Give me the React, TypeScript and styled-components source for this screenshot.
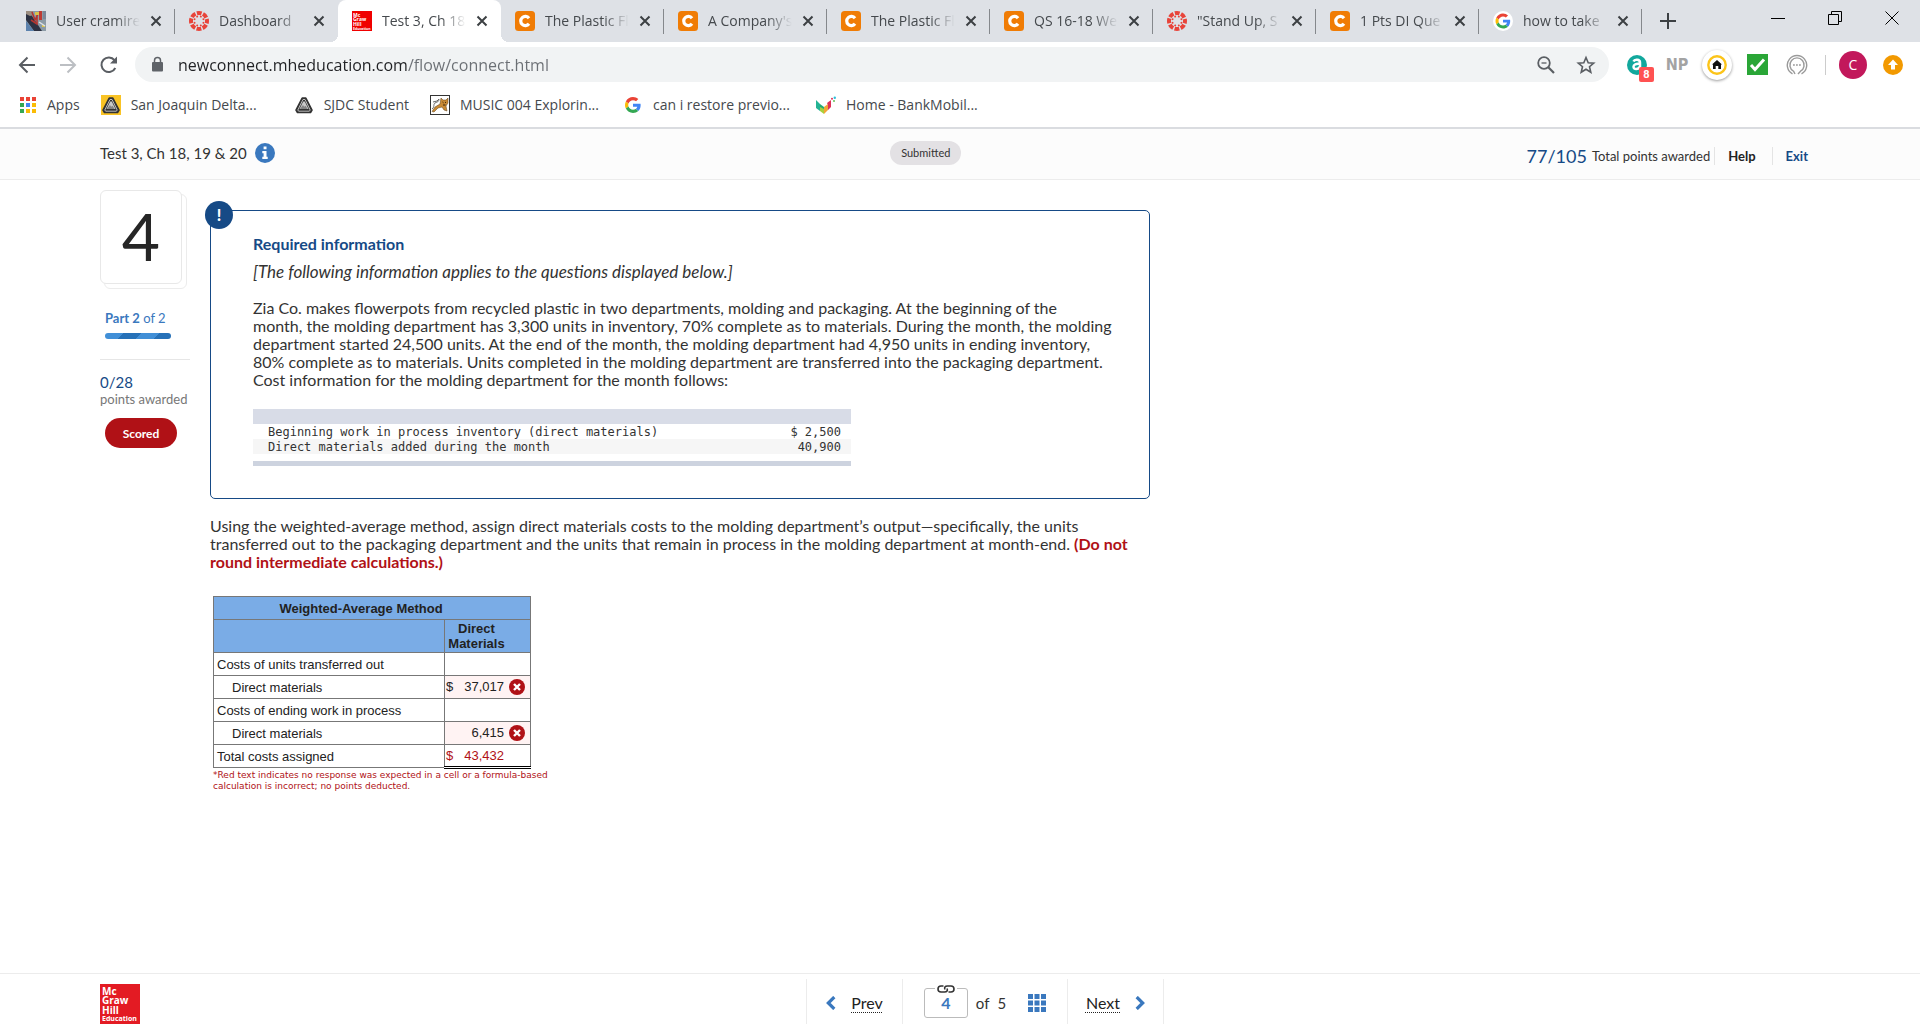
import React from 'react';
import styled, { createGlobalStyle, css } from 'styled-components';

const navy = '#164a86';
const blue = '#3a78be';
const red = '#b01116';
const uiFont = '"Open Sans", "Noto Sans", sans-serif';
const pageFont = 'Lato, "Open Sans", sans-serif';

const GlobalStyle = createGlobalStyle`
  *, *::before, *::after { box-sizing: border-box; }
  body { margin: 0; background: #fff; color: #333; font-family: ${pageFont}; }
  button, input { font: inherit; color: inherit; margin: 0; }
  button { padding: 0; border: 0; background: none; cursor: pointer; }
  a { color: inherit; text-decoration: none; }
  svg { display: block; flex: none; }
  h1, h2, p { margin: 0; }
`;

const Page = styled.div`
  display: flex;
  flex-direction: column;
  min-height: 100vh;
`;

/* ---------- browser chrome ---------- */

const Chrome = styled.header`
  font-family: ${uiFont};
  border-bottom: 2px solid #dadce0;
`;

const TabStrip = styled.div`
  display: flex;
  height: 42px;
  padding-left: 12px;
  background: #dee1e6;
`;

const Tab = styled.div<{ $active?: boolean; $divider?: boolean }>`
  position: relative;
  display: flex;
  align-items: center;
  gap: 10px;
  flex: 0 1 163px;
  min-width: 0;
  padding: 0 13px 0 14px;
  color: #45494d;
  ${(p) => p.$active && css`
    background: #fff;
    border-radius: 8px 8px 0 0;
    &::before, &::after {
      content: '';
      position: absolute;
      bottom: 0;
      width: 8px;
      height: 8px;
    }
    &::before { left: -8px; background: radial-gradient(circle at 0 0, transparent 8px, #fff 8px); }
    &::after { right: -8px; background: radial-gradient(circle at 100% 0, transparent 8px, #fff 8px); }
  `}
  ${(p) => p.$divider && css`
    &::after {
      content: '';
      position: absolute;
      right: 0;
      top: 9px;
      width: 1px;
      height: 25px;
      background: #85888c;
    }
  `}
`;

const TabTitle = styled.button`
  flex: 1;
  min-width: 0;
  overflow: hidden;
  white-space: nowrap;
  text-align: left;
  font-size: 14px;
  line-height: 24px;
  mask-image: linear-gradient(to right, #000 70%, transparent 100%);
`;

const IconButton = styled.button`
  display: grid;
  place-items: center;
  flex: none;
`;

const NewTab = styled(IconButton)`
  width: 52px;
`;

const WindowControls = styled.div`
  display: flex;
  margin-left: auto;
`;

const WindowButton = styled(IconButton)`
  width: 57px;
  height: 36px;
`;

const Toolbar = styled.div`
  display: flex;
  align-items: center;
  height: 45px;
  padding: 0 17px 0 6px;
`;

const NavButton = styled(IconButton)`
  width: 41px;
  height: 35px;
`;

const Omnibox = styled.form`
  display: flex;
  align-items: center;
  flex: 1;
  gap: 12px;
  height: 35px;
  margin-left: 6px;
  padding: 0 13px 0 14px;
  border-radius: 18px;
  background: #f1f3f4;
`;

const UrlInput = styled.input`
  flex: 1;
  min-width: 0;
  padding: 0;
  border: 0;
  font-size: 16px;
  line-height: 24px;
  color: transparent;
  background: linear-gradient(to right, #202124 229px, #6b6f74 229px);
  background-clip: text;
  outline: 0;
`;

const OmniActions = styled.div`
  display: flex;
  gap: 20px;
`;

const Extensions = styled.div`
  display: grid;
  grid-auto-flow: column;
  grid-auto-columns: 40px;
  align-items: center;
  justify-items: center;
  margin-left: 8px;
`;

const ExtensionIcon = styled(IconButton)`
  position: relative;
  width: 36px;
  height: 35px;
`;

const CountBadge = styled.span`
  position: absolute;
  right: 1px;
  bottom: 0;
  width: 15px;
  border-radius: 2px;
  background: #ff5252;
  color: #fff;
  font: 700 11px/15px Roboto, sans-serif;
`;

const NpMark = styled.span`
  color: #a3a3a3;
  font: 700 16px/20px "DejaVu Sans Condensed", Roboto, sans-serif;
`;

const HomeDisc = styled.span`
  display: grid;
  place-items: center;
  width: 30px;
  height: 30px;
  border-radius: 50%;
  background: #fff;
  box-shadow: 0 1px 3px rgba(0, 0, 0, 0.4);
`;

const AccountArea = styled.div`
  display: flex;
  align-items: center;
  gap: 16px;
  margin-left: 8px;
  padding-left: 14px;
  background: linear-gradient(#ccc, #ccc) left center / 1px 20px no-repeat;
`;

const Avatar = styled.button`
  width: 28px;
  height: 28px;
  border-radius: 50%;
  background: #c2185b;
  color: #fff;
  font-size: 14px;
  line-height: 28px;
`;

const Bookmarks = styled.nav`
  display: flex;
  align-items: center;
  gap: 21px;
  height: 40px;
  padding: 0 19px 4px;
`;

const Bookmark = styled.a<{ $full?: boolean }>`
  display: flex;
  align-items: center;
  gap: 10px;
  flex: 0 0 ${(p) => (p.$full ? '172px' : 'auto')};
  color: #45494d;
  font-size: 14px;
  line-height: 20px;
  white-space: nowrap;
`;

/* ---------- assignment page ---------- */

const AssignmentBar = styled.div`
  display: grid;
  grid-template-columns: 14fr auto 15fr;
  align-items: center;
  height: 51px;
  padding: 0 112px 3px 100px;
  background: #fcfcfc;
  border-bottom: 1px solid #ececec;
`;

const AssignmentTitle = styled.div`
  display: flex;
  align-items: center;
  gap: 8px;
`;

const TitleText = styled.h1`
  font-size: 15px;
  line-height: 20px;
  font-weight: 400;
`;

const StatusPill = styled.span`
  padding: 0 11px;
  border-radius: 12px;
  background: #e3e1e4;
  font-size: 11px;
  line-height: 24px;
`;

const Summary = styled.div`
  display: flex;
  align-items: center;
  justify-content: flex-end;
  padding-top: 7px;
  font-size: 13px;
  line-height: 18px;
`;

const Score = styled.span`
  margin-right: 5px;
  color: ${navy};
  font-size: 18px;
`;

const SummaryLink = styled.a<{ $accent?: boolean }>`
  margin-left: ${(p) => (p.$accent ? '16px' : '4px')};
  padding-left: 13px;
  border-left: 1px solid #e4e4e4;
  color: ${(p) => (p.$accent ? navy : '#222')};
  font-weight: 700;
`;

const Content = styled.main`
  display: flex;
  flex: 1;
  gap: 20px;
  padding: 10px 100px 24px;
`;

const Sidebar = styled.aside`
  flex: 0 0 90px;
`;

const QuestionCard = styled.div`
  position: relative;
  width: 82px;
  padding-bottom: 2px;
  border: 1px solid #e8e8e8;
  border-radius: 6px;
  background: #fff;
  color: #262626;
  font-size: 66px;
  line-height: 90px;
  text-align: center;
  &::after {
    content: '';
    position: absolute;
    inset: 3px -6px -6px 3px;
    z-index: -1;
    border: 1px solid #ececec;
    border-radius: 6px;
  }
`;

const PartBlock = styled.div`
  margin-top: 25px;
  padding: 0 5px 20px;
  border-bottom: 1px solid #e6e6e6;
  color: ${blue};
  font-size: 13px;
  line-height: 18px;
`;

const PartBar = styled.div`
  width: 66px;
  height: 6px;
  margin-top: 6px;
  border-radius: 3px;
  background: linear-gradient(135deg, #418fd7 25%, #2671b8 25%, #2671b8 50%, #418fd7 50%, #418fd7 75%, #2671b8 75%) 0 0 / 36px 36px;
`;

const Points = styled.div`
  margin-top: 14px;
  color: ${navy};
  font-size: 15px;
  line-height: 16px;
`;

const PointsLabel = styled.div`
  color: #777;
  font-size: 13px;
  line-height: 18px;
`;

const ScoredButton = styled.button`
  display: block;
  width: 72px;
  height: 30px;
  margin: 10px 0 0 5px;
  border-radius: 15px;
  background: ${red};
  color: #fff;
  font-size: 12px;
  font-weight: 700;
`;

const Question = styled.article`
  flex: 0 1 940px;
  min-width: 0;
  padding-top: 20px;
  font-size: 16px;
  line-height: 18px;
`;

const InfoBox = styled.section`
  position: relative;
  padding: 24px 34px 32px 42px;
  border: 1px solid ${navy};
  border-radius: 5px;
`;

const InfoBadge = styled.span`
  position: absolute;
  left: -6px;
  top: -10px;
  width: 28px;
  border-radius: 50%;
  background: ${navy};
  color: #fff;
  font-size: 16px;
  font-weight: 900;
  line-height: 28px;
  text-align: center;
`;

const InfoTitle = styled.h2`
  color: ${navy};
  font-size: 16px;
  font-weight: 700;
  line-height: 18px;
`;

const Applies = styled.p`
  margin: 10px 0 18px;
  font-size: 17px;
  font-style: italic;
`;

const LedgerTable = styled.table`
  width: 598px;
  max-width: 100%;
  margin-top: 20px;
  border-spacing: 0;
  font-family: "DejaVu Sans Mono", "Liberation Mono", monospace;
  font-size: 12px;
  line-height: 14px;
  td, th { padding: 1px 10px 0 15px; font-weight: 400; text-align: left; }
  td { text-align: right; }
  tbody tr:nth-child(2) { background: #f6f6f6; }
`;

const LedgerHead = styled.thead`
  background: #d8dce7;
  td { height: 15px; }
`;

const LedgerRule = styled.div`
  width: 598px;
  max-width: 100%;
  height: 5px;
  margin-top: 7px;
  background: #cdd3df;
`;

const Prompt = styled.p`
  margin-top: 18px;
`;

const Caution = styled.strong`
  color: ${red};
`;

const AnswerTable = styled.table`
  width: 318px;
  margin: 25px 0 0 3px;
  border-collapse: collapse;
  table-layout: fixed;
  color: #222;
  font-family: "Liberation Sans", Arial, sans-serif;
  font-size: 13px;
  line-height: 15px;
  th, td { height: 23px; border: 1px solid #777; }
`;

const LabelColumn = styled.col`
  width: 231px;
`;

const HeadCell = styled.th`
  padding: 1px 22px 1px 0;
  background: #7aace6;
`;

const RowLabel = styled.th<{ $indent?: boolean }>`
  padding: 0 0 0 ${(p) => (p.$indent ? '18px' : '3px')};
  font-weight: 400;
  text-align: left;
`;

const ValueCell = styled.td<{ $wrong?: boolean; $total?: boolean }>`
  padding: 0;
  ${(p) => p.$wrong && css`background: #fff3f3;`}
  ${(p) => p.$total && css`
    && { border-top: 1px solid #000; border-bottom: 3px double #000; }
    color: ${red};
  `}
`;

const Amount = styled.div`
  display: grid;
  grid-template-columns: 8px 1fr 16px;
  column-gap: 5px;
  padding: 0 5px 0 1px;
`;

const Figure = styled.span`
  grid-column: 2;
  text-align: right;
`;

const Note = styled.p`
  max-width: 348px;
  padding: 1px 0 0 3px;
  color: ${red};
  font-family: "DejaVu Sans", sans-serif;
  font-size: 9px;
  line-height: 11px;
`;

const Footer = styled.footer`
  display: grid;
  grid-template-columns: 40px 1fr auto 1fr;
  height: 57px;
  padding: 5px 90px 8px 100px;
  border-top: 1px solid #ececec;
`;

const Pager = styled.nav`
  grid-column: 3;
  display: flex;
  border-left: 1px solid #ececec;
  font-size: 16px;
  line-height: 20px;
`;

const PagerSection = styled.div<{ $width: number }>`
  display: flex;
  align-items: center;
  justify-content: center;
  width: ${(p) => p.$width}px;
  padding-top: 2px;
  border-right: 1px solid #ececec;
`;

const PagerLink = styled.a`
  display: flex;
  align-items: center;
  gap: 15px;
  color: #222;
`;

const PagerWord = styled.span`
  text-decoration: underline dotted 1px;
  text-underline-offset: 3px;
`;

const PageField = styled.label`
  position: relative;
  margin-right: 8px;
`;

const PageInput = styled.input`
  display: block;
  width: 44px;
  height: 30px;
  padding: 0;
  border: 1px solid #bbb;
  border-radius: 3px;
  color: ${blue};
  font-weight: 700;
  text-align: center;
`;

const LinkMark = styled.span`
  position: absolute;
  left: 11px;
  top: -3px;
  padding: 0 2px;
  background: #fff;
`;

const PageCount = styled.span`
  display: flex;
  gap: 8px;
  margin-right: 22px;
  font-size: 15px;
`;

const PublisherLogo = styled.a`
  display: block;
  height: 40px;
  margin-top: 5px;
`;

/* ---------- drawings ---------- */

const McGrawIcon = ({ size, bg }: { size: number; bg: string }) => (
  <svg width={size} height={size} viewBox="0 0 40 40">
    <rect width="40" height="40" fill={bg} />
    <g fill="#fff" fontFamily="Open Sans, sans-serif" fontWeight="700" fontSize="10">
      <text x="2" y="11">Mc</text>
      <text x="2" y="20">Graw</text>
      <text x="2" y="30">Hill</text>
      <text x="2" y="37" fontSize="7">Education</text>
    </g>
  </svg>
);

const CanvasIcon = () => (
  <svg width="20" height="20" viewBox="0 0 20 20">
    <circle cx="10" cy="10" r="8" fill="none" stroke="#e8443a" strokeWidth="4" strokeDasharray="4.8 1.483" strokeDashoffset="2.4" />
    {[0, 45, 90, 135, 180, 225, 270, 315].map((a) => (
      <circle key={a} cx="10" cy="5.2" r="1" fill="#e8443a" transform={`rotate(${a + 22.5} 10 10)`} />
    ))}
  </svg>
);

const CheggIcon = () => (
  <svg width="20" height="20" viewBox="0 0 20 20">
    <rect width="20" height="20" rx="3.5" fill="#f07c05" />
    <path d="M14 7.2A4.6 4.6 0 1 0 14 12.8" fill="none" stroke="#fff" strokeWidth="3.2" />
  </svg>
);

const GoogleIcon = ({ disc }: { disc?: boolean }) => (
  <svg width="20" height="20" viewBox="0 0 20 20">
    {disc && <circle cx="10" cy="10" r="10" fill="#fff" />}
    <g transform={disc ? 'translate(2.5 2.5) scale(.3125)' : 'translate(2 2) scale(.333)'}>
      <path fill="#EA4335" d="M24 9.5c3.54 0 6.71 1.22 9.21 3.6l6.85-6.85C35.9 2.38 30.47 0 24 0 14.62 0 6.51 5.38 2.56 13.22l7.98 6.19C12.43 13.72 17.74 9.5 24 9.5z" />
      <path fill="#4285F4" d="M46.98 24.55c0-1.57-.15-3.09-.38-4.55H24v9.02h12.94c-.58 2.96-2.26 5.48-4.78 7.18l7.73 6c4.51-4.18 7.09-10.36 7.09-17.65z" />
      <path fill="#FBBC05" d="M10.53 28.59c-.48-1.45-.76-2.99-.76-4.59s.27-3.14.76-4.59l-7.98-6.19C.92 16.46 0 20.12 0 24c0 3.88.92 7.54 2.56 10.78l7.97-6.19z" />
      <path fill="#34A853" d="M24 48c6.48 0 11.93-2.13 15.89-5.81l-7.73-6c-2.15 1.45-4.92 2.3-8.16 2.3-6.26 0-11.57-4.22-13.47-9.91l-7.98 6.19C6.51 42.62 14.62 48 24 48z" />
    </g>
  </svg>
);

const PhotoIcon = () => (
  <svg width="20" height="20" viewBox="0 0 20 20">
    <rect width="20" height="20" fill="#8c9ba6" />
    <path d="M0 2h4l12 18H8L0 9z" fill="#2c3142" />
    <path d="M0 0h7v4L4 5 0 3z" fill="#9b8d80" />
    <path d="M0 10l8 10H0z" fill="#5c82ad" />
    <path d="M6 1l3 8 4-8M5 9l6 4V1" fill="none" stroke="#b23530" strokeWidth="1.6" />
    <path d="M13 0h3v9h-3z" fill="#bd3b34" />
    <path d="M17 0h3v8h-3z" fill="#7b8899" />
    <path d="M9 1h4v3H9zM16 14h3v2h-3z" fill="#d9c34c" />
    <path d="M13 11l6 4" stroke="#dde3e8" strokeWidth="1.5" />
  </svg>
);

const DeltaIcon = ({ bg }: { bg?: string }) => (
  <svg width="20" height="20" viewBox="0 0 20 20">
    {bg && <rect width="20" height="20" fill={bg} />}
    <path d="M8.2 3h3.6L18 15l-1.5 2.5h-13L2 15z" fill="#333" stroke="#333" strokeWidth="1.6" strokeLinejoin="round" />
    <path d="M9 4.5h2L16.2 15l-.8 1.2H4.6L3.8 15z" fill="none" stroke="#ddd" strokeWidth=".8" />
    <path d="M9.2 6.5h1.6L14.500 14H5.500z" fill="#c9c9c9" />
    <path d="M7 12.5L9 10l1.200 1.800 1.400-1 2 3.200H6z" fill="#858585" />
  </svg>
);

const MustangIcon = () => (
  <svg width="20" height="20" viewBox="0 0 20 20">
    <rect x=".5" y=".5" width="19" height="19" fill="#fff" stroke="#333" />
    <path d="M11 3l2 2h3l2-2v5l-2 3 1 5-3-1-2-3-4 1-4 4-2-.5L5 12l5-3z" fill="#c98a35" stroke="#5d3f18" strokeWidth=".5" />
    <path d="M2 14c3-2 1-5 3-6s4-1 4-4L7 6 3 7" fill="none" stroke="#666" strokeWidth="1" />
    <path d="M12.5 7l1 .8M16 7l-1 .8M13 10h2.5" stroke="#3a240b" />
  </svg>
);

const BankIcon = () => (
  <svg width="20" height="20" viewBox="0 0 20 20">
    <path d="M0 5l4 4v7l-4-3z" fill="#23b394" />
    <path d="M4 9l4 3v3l-4 1z" fill="#23a876" />
    <path d="M4 12l4 2v5l-4-3z" fill="#a7cf3c" />
    <path d="M8 12l4-3v6l-4 4z" fill="#f3a536" />
    <path d="M11 8l4-3v7l-3 3v-5z" fill="#de3158" />
    <circle cx="16" cy="3.8" r="1" fill="#de3158" /><circle cx="18.8" cy="2.8" r="1.2" fill="#2cc0dc" /><circle cx="18" cy="6" r=".9" fill="#57b947" />
  </svg>
);

const AppsIcon = () => (
  <svg width="18" height="18" viewBox="0 0 18 18">
    {['#ea4335', '#ea4335', '#ea4335', '#34a853', '#4285f4', '#fbbc05', '#34a853', '#fbbc05', '#fbbc05'].map((c, i) => (
      <rect key={i} x={(i % 3) * 6 + 1} y={Math.floor(i / 3) * 6 + 1} width="4" height="4" fill={c} />
    ))}
  </svg>
);

const CloseIcon = () => (
  <svg width="12" height="12" viewBox="0 0 12 12"><path d="M1.5 1.5l9 9m0-9l-9 9" stroke="#3c4043" strokeWidth="2" /></svg>
);

const ArrowIcon = ({ flip }: { flip?: boolean }) => (
  <svg width="18" height="18" viewBox="0 0 18 18">
    <path d="M17 9H2m7.500-7.500L2 9l7.500 7.500" transform={flip ? 'rotate(180 9 9)' : undefined} fill="none" stroke={flip ? '#bcbfc3' : '#5a5e63'} strokeWidth="2" />
  </svg>
);

const ReloadIcon = () => (
  <svg width="20" height="20" viewBox="0 0 20 20">
    <path d="M16.300 13A7.300 7.300 0 1 1 15.500 5.200" fill="none" stroke="#5a5e63" strokeWidth="2" />
    <path d="M18 1.500v7h-7z" fill="#5a5e63" />
  </svg>
);

const LockIcon = () => (
  <svg width="17" height="17" viewBox="0 0 17 17">
    <rect x="3" y="6" width="11" height="9.500" rx="1" fill="#5f6368" />
    <path d="M5.500 7V4.500a3 3 0 0 1 6 0V7" fill="none" stroke="#5f6368" strokeWidth="1.500" />
  </svg>
);

const ZoomOutIcon = () => (
  <svg width="20" height="20" viewBox="0 0 20 20" fill="none" stroke="#5a5e63" strokeWidth="1.800">
    <circle cx="8" cy="8" r="5.800" /><path d="M12.300 12.300L18 18" strokeWidth="2.200" /><path d="M5.500 8h5" strokeWidth="1.300" />
  </svg>
);

const StarIcon = () => (
  <svg width="20" height="20" viewBox="0 0 20 20">
    <path d="M10 2.500l2.200 5.200 5.500.4-4.200 3.600 1.300 5.500L10 14.200l-4.800 3 1.300-5.500-4.200-3.600 5.500-.4z" fill="none" stroke="#5a5e63" strokeWidth="1.600" />
  </svg>
);

const AmazonAssistantIcon = () => (
  <svg width="20" height="20" viewBox="0 0 20 20">
    <circle cx="10" cy="10" r="10" fill="#12a89d" />
    <path d="M6.500 6.500c1-2.500 6.500-2.500 6.500 1V13l1.500 1.500M13 9c-4-.5-6.500.5-6.500 2.800 0 3 5 3 6.500-.3" fill="none" stroke="#fff" strokeWidth="2.500" />
  </svg>
);

const HouseIcon = () => (
  <svg width="20" height="20" viewBox="0 0 20 20">
    <circle cx="10" cy="10" r="8.700" fill="#fff" stroke="#fcc419" strokeWidth="2.400" />
    <path d="M10 5l5 4.500h-1V14h-2.700v-3H8.700v3H6V9.500H5z" fill="#111" />
  </svg>
);

const CheckIcon = () => (
  <svg width="21" height="21" viewBox="0 0 21 21"><rect width="21" height="21" fill="#2aa637" /><path d="M4 11l4 4.500L17 5.500" fill="none" stroke="#fff" strokeWidth="3" /></svg>
);

const ChatIcon = () => (
  <svg width="22" height="22" viewBox="0 0 22 22" fill="none" stroke="#9a9a9a" strokeWidth="1.400">
    <path d="M6.500 19.800a9.700 9.700 0 1 1 9 0" /><path d="M7.500 17.200a7.100 7.100 0 1 1 7 0L12 20M7.500 17.200L9 20" />
    <path d="M7 11h8" strokeWidth="1.600" strokeDasharray="1.800 1.200" />
  </svg>
);

const UpdateIcon = () => (
  <svg width="20" height="20" viewBox="0 0 20 20"><circle cx="10" cy="10" r="10" fill="#f29900" /><path d="M10 4.500l5 5.500h-3v4.500H8V10H5z" fill="#fff" /></svg>
);

const InfoIcon = () => (
  <svg width="20" height="20" viewBox="0 0 20 20">
    <circle cx="10" cy="10" r="10" fill={blue} />
    <path d="M8.600 3.500h2.900v2.800H8.600zM7.300 8h4.200v5.800h1.200V16H7.300v-2.200h1.300v-3.600H7.300z" fill="#fff" />
  </svg>
);

const WrongIcon = () => (
  <svg width="16" height="16" viewBox="0 0 16 16" role="img" aria-label="incorrect">
    <circle cx="8" cy="8" r="8" fill={red} /><path d="M5 5l6 6m0-6l-6 6" stroke="#fff" strokeWidth="2.400" />
  </svg>
);

const ChevronIcon = ({ right }: { right?: boolean }) => (
  <svg width="10" height="14" viewBox="0 0 10 14">
    <path d="M8.300 1L2.300 7l6 6" transform={right ? 'rotate(180 5 7)' : undefined} fill="none" stroke={blue} strokeWidth="3.200" />
  </svg>
);

const ChainIcon = () => (
  <svg width="18" height="8" viewBox="0 0 18 8" fill="none" stroke="#333" strokeWidth="1.600">
    <path d="M6.500 1H4a3 3 0 0 0 0 6h3.500C10 7 11 5.500 10 3.500" />
    <path d="M11.500 7H14a3 3 0 0 0 0-6h-3.500C8 1 7 2.500 8 4.500" />
  </svg>
);

const GridIcon = () => (
  <svg width="18" height="18" viewBox="0 0 18 18" fill={blue}>
    {[0, 1, 2, 3, 4, 5, 6, 7, 8].map((i) => <rect key={i} x={(i % 3) * 6.500} y={Math.floor(i / 3) * 6.500} width="5" height="5" />)}
  </svg>
);

/* ---------- data ---------- */

const tabs = [
  { title: 'User cramire:', icon: <PhotoIcon />, divider: true },
  { title: 'Dashboard', icon: <CanvasIcon /> },
  { title: 'Test 3, Ch 18,', icon: <McGrawIcon size={20} bg="#f00000" />, active: true },
  { title: 'The Plastic Fl', icon: <CheggIcon />, divider: true },
  { title: "A Company's", icon: <CheggIcon />, divider: true },
  { title: 'The Plastic Fl', icon: <CheggIcon />, divider: true },
  { title: 'QS 16-18 We', icon: <CheggIcon />, divider: true },
  { title: '"Stand Up, S', icon: <CanvasIcon />, divider: true },
  { title: '1 Pts DI Que', icon: <CheggIcon />, divider: true },
  { title: 'how to take', icon: <GoogleIcon disc />, divider: true },
];

const bookmarks = [
  { label: 'Apps', icon: <AppsIcon /> },
  { label: 'San Joaquin Delta...', icon: <DeltaIcon bg="#f9c325" />, full: true },
  { label: 'SJDC Student', icon: <DeltaIcon /> },
  { label: 'MUSIC 004 Explorin...', icon: <MustangIcon />, full: true },
  { label: 'can i restore previo...', icon: <GoogleIcon />, full: true },
  { label: 'Home - BankMobil...', icon: <BankIcon />, full: true },
];

type CostRow = { label: string; indent?: boolean; currency?: boolean; amount?: string; wrong?: boolean; total?: boolean };
const costRows: CostRow[] = [
  { label: 'Costs of units transferred out' },
  { label: 'Direct materials', indent: true, currency: true, amount: '37,017', wrong: true },
  { label: 'Costs of ending work in process' },
  { label: 'Direct materials', indent: true, amount: '6,415', wrong: true },
  { label: 'Total costs assigned', currency: true, amount: '43,432', total: true },
];

/* ---------- sections ---------- */

const BrowserChrome = () => (
  <Chrome>
    <TabStrip>
      {tabs.map((t, i) => (
        <Tab key={i} $active={t.active} $divider={t.divider}>
          {t.icon}
          <TabTitle>{t.title}</TabTitle>
          <IconButton aria-label="Close tab"><CloseIcon /></IconButton>
        </Tab>
      ))}
      <NewTab aria-label="New tab">
        <svg width="16" height="16" viewBox="0 0 16 16"><path d="M8 0v16M0 8h16" stroke="#3c4043" strokeWidth="2" /></svg>
      </NewTab>
      <WindowControls>
        <WindowButton aria-label="Minimize"><svg width="14" height="14" viewBox="0 0 14 14"><path d="M0 7.500h14" stroke="#000" /></svg></WindowButton>
        <WindowButton aria-label="Restore"><svg width="14" height="14" viewBox="0 0 14 14" fill="none" stroke="#000"><path d="M.5 3.500h10v10H.5zM3.500 3.500v-3h10v10h-3" /></svg></WindowButton>
        <WindowButton aria-label="Close"><svg width="14" height="14" viewBox="0 0 14 14"><path d="M.5 .5l13 13m0-13l-13 13" stroke="#000" /></svg></WindowButton>
      </WindowControls>
    </TabStrip>
    <Toolbar>
      <NavButton aria-label="Back"><ArrowIcon /></NavButton>
      <NavButton aria-label="Forward"><ArrowIcon flip /></NavButton>
      <NavButton aria-label="Reload"><ReloadIcon /></NavButton>
      <Omnibox>
        <LockIcon />
        <UrlInput aria-label="Address" defaultValue="newconnect.mheducation.com/flow/connect.html" />
        <OmniActions>
          <IconButton type="button" aria-label="Zoom"><ZoomOutIcon /></IconButton>
          <IconButton type="button" aria-label="Bookmark this page"><StarIcon /></IconButton>
        </OmniActions>
      </Omnibox>
      <Extensions>
        <ExtensionIcon aria-label="Shopping assistant"><AmazonAssistantIcon /><CountBadge>8</CountBadge></ExtensionIcon>
        <ExtensionIcon><NpMark>NP</NpMark></ExtensionIcon>
        <ExtensionIcon aria-label="Home"><HomeDisc><HouseIcon /></HomeDisc></ExtensionIcon>
        <ExtensionIcon aria-label="Checker"><CheckIcon /></ExtensionIcon>
        <ExtensionIcon aria-label="Chat"><ChatIcon /></ExtensionIcon>
      </Extensions>
      <AccountArea>
        <Avatar>C</Avatar>
        <IconButton aria-label="Update"><UpdateIcon /></IconButton>
      </AccountArea>
    </Toolbar>
    <Bookmarks>
      {bookmarks.map((b) => (
        <Bookmark key={b.label} href="#" $full={b.full}>{b.icon}{b.label}</Bookmark>
      ))}
    </Bookmarks>
  </Chrome>
);

const QuestionSidebar = () => (
  <Sidebar>
    <QuestionCard>4</QuestionCard>
    <PartBlock>
      <strong>Part 2</strong> of 2
      <PartBar />
    </PartBlock>
    <Points>0/28</Points>
    <PointsLabel>points awarded</PointsLabel>
    <ScoredButton>Scored</ScoredButton>
  </Sidebar>
);

const CostTable = () => (
  <AnswerTable>
    <colgroup><LabelColumn /><col /></colgroup>
    <thead>
      <tr><HeadCell colSpan={2}>Weighted-Average Method</HeadCell></tr>
      <tr><HeadCell /><HeadCell>Direct Materials</HeadCell></tr>
    </thead>
    <tbody>
      {costRows.map((r, i) => (
        <tr key={i}>
          <RowLabel scope="row" $indent={r.indent}>{r.label}</RowLabel>
          <ValueCell $wrong={r.wrong} $total={r.total}>
            {r.amount && (
              <Amount>
                {r.currency && <span>$</span>}
                <Figure>{r.amount}</Figure>
                {r.wrong && <WrongIcon />}
              </Amount>
            )}
          </ValueCell>
        </tr>
      ))}
    </tbody>
  </AnswerTable>
);

export default function App() {
  return (
    <Page>
      <GlobalStyle />
      <BrowserChrome />
      <AssignmentBar>
        <AssignmentTitle>
          <TitleText>Test 3, Ch 18, 19 &amp; 20</TitleText>
          <IconButton aria-label="Assignment information"><InfoIcon /></IconButton>
        </AssignmentTitle>
        <StatusPill>Submitted</StatusPill>
        <Summary>
          <Score>77/105</Score>
          <span>Total points awarded</span>
          <SummaryLink href="#">Help</SummaryLink>
          <SummaryLink href="#" $accent>Exit</SummaryLink>
        </Summary>
      </AssignmentBar>
      <Content>
        <QuestionSidebar />
        <Question>
          <InfoBox>
            <InfoBadge>!</InfoBadge>
            <InfoTitle>Required information</InfoTitle>
            <Applies>[The following information applies to the questions displayed below.]</Applies>
            <p>
              Zia Co. makes flowerpots from recycled plastic in two departments, molding and packaging. At the
              beginning of the<br />month, the molding department has 3,300 units in inventory, 70% complete as to
              materials. During the month, the molding department started 24,500 units. At the end of the month, the
              molding department had 4,950 units in ending inventory, 80% complete as to materials. Units completed
              in the molding department are transferred into the packaging department. Cost information for the
              molding department for the month follows:
            </p>
            <LedgerTable>
              <LedgerHead><tr><td colSpan={2} /></tr></LedgerHead>
              <tbody>
                <tr><th scope="row">Beginning work in process inventory (direct materials)</th><td>$ 2,500</td></tr>
                <tr><th scope="row">Direct materials added during the month</th><td>40,900</td></tr>
              </tbody>
            </LedgerTable>
            <LedgerRule />
          </InfoBox>
          <Prompt>
            Using the weighted-average method, assign direct materials costs to the molding department’s
            output—specifically, the units transferred out to the packaging department and the units that remain in
            process in the molding department at month-end. <Caution>(Do not round intermediate calculations.)</Caution>
          </Prompt>
          <CostTable />
          <Note>
            *Red text indicates no response was expected in a cell or a formula-based calculation is incorrect; no
            points deducted.
          </Note>
        </Question>
      </Content>
      <Footer>
        <PublisherLogo href="#"><McGrawIcon size={40} bg="#e31b23" /></PublisherLogo>
        <Pager>
          <PagerSection $width={96}>
            <PagerLink href="#"><ChevronIcon /><PagerWord>Prev</PagerWord></PagerLink>
          </PagerSection>
          <PagerSection $width={165}>
            <PageField>
              <PageInput aria-label="Question number" defaultValue="4" />
              <LinkMark><ChainIcon /></LinkMark>
            </PageField>
            <PageCount><span>of</span><span>5</span></PageCount>
            <IconButton aria-label="All questions"><GridIcon /></IconButton>
          </PagerSection>
          <PagerSection $width={96}>
            <PagerLink href="#"><PagerWord>Next</PagerWord><ChevronIcon right /></PagerLink>
          </PagerSection>
        </Pager>
      </Footer>
    </Page>
  );
}
